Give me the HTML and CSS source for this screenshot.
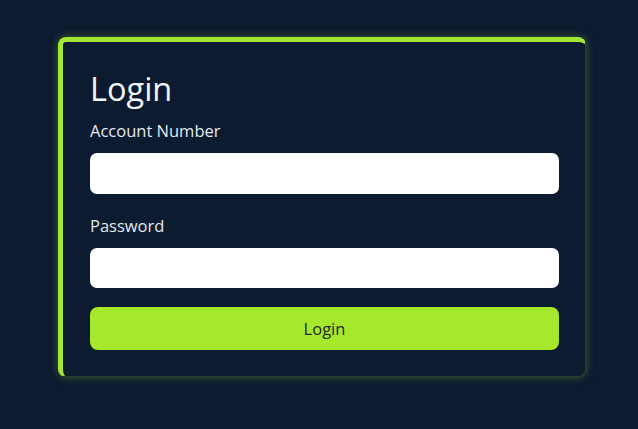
FILE: index.html
```html
<!DOCTYPE html>
<html lang="en">
<head>
<meta charset="utf-8">
<title>Login</title>
<link rel="stylesheet" href="styles.css">
</head>
<body>
<main class="page">
  <form class="card">
    <h1 class="title">Login</h1>
    <label class="label" for="acct">Account Number</label>
    <input class="input" id="acct" type="text">
    <label class="label label-gap" for="pw">Password</label>
    <input class="input" id="pw" type="password">
    <button class="btn" type="button">Login</button>
  </form>
</main>
</body>
</html>
```
FILE: styles.css
```css
* { box-sizing: border-box; }
html, body { margin: 0; padding: 0; }
body {
  background: #0c1b30;
  font-family: "Open Sans", "Noto Sans", sans-serif;
  width: 638px;
  height: 429px;
  overflow: hidden;
}
.page {
  padding: 37px 0 0 58px;
}
.card {
  width: 528px;
  height: 340px;
  background: #0c1b30;
  border-radius: 8px;
  border: 1px solid rgba(163, 230, 53, 0.18);
  border-top: 5px solid #a3e635;
  border-left: 5px solid #a3e635;
  box-shadow: 0 0 9px rgba(163, 230, 53, 0.35);
  padding: 28px 26px 26px 27px;
  display: flex;
  flex-direction: column;
}
.title {
  margin: 0;
  font-size: 32.5px;
  font-weight: 400;
  line-height: 38px;
  color: #f3f6fa;
}
.label {
  display: block;
  margin-top: 12px;
  font-size: 16.5px;
  line-height: 22px;
  color: #e4e9f0;
}
.label-gap { margin-top: 21px; }
.input {
  display: block;
  width: 100%;
  height: 41px;
  margin-top: 11px;
  border: none;
  border-radius: 7px;
  background: #ffffff;
}
.btn {
  margin-top: 19px;
  height: 43px;
  width: 100%;
  border: none;
  border-radius: 8px;
  background: #a6e82c;
  color: #1e2a22;
  font-family: inherit;
  font-size: 16.5px;
}
```
